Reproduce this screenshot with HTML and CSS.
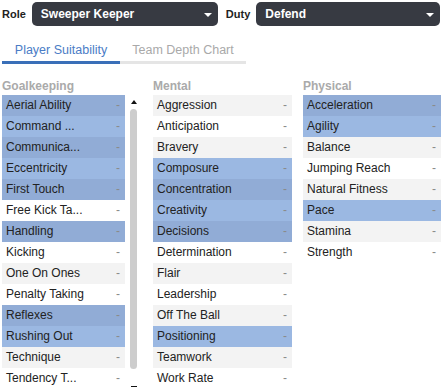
FILE: index.html
```html
<!DOCTYPE html>
<html lang="en">
<head>
  <meta charset="UTF-8">
  <title>Role Suitability</title>
  <link rel="stylesheet" href="styles.css">
</head>
<body>
  <div class="topbar">
    <label class="field-label">Role</label>
    <div class="select role-select">Sweeper Keeper<span class="caret"></span></div>
    <label class="field-label duty-label">Duty</label>
    <div class="select duty-select">Defend<span class="caret"></span></div>
  </div>

  <div class="tabs">
    <div class="tab active">Player Suitability</div>
    <div class="tab">Team Depth Chart</div>
  </div>

  <div class="columns">
    <div class="group gk">
      <h4>Goalkeeping</h4>
      <div class="gk-body">
        <div class="list scroll" id="gk"></div>
        <div class="scrollbar">
          <span class="arrow-up"></span>
          <span class="thumb"></span>
          <span class="arrow-down"></span>
        </div>
      </div>
    </div>
    <div class="group mental">
      <h4>Mental</h4>
      <div class="list" id="mental"></div>
    </div>
    <div class="group physical">
      <h4>Physical</h4>
      <div class="list" id="physical"></div>
    </div>
  </div>

  <script>
    // attributes, 1 = key attribute for the role
    const groups = {
      gk: [["Aerial Ability", 1], ["Command ...", 1], ["Communica...", 1], ["Eccentricity", 1],
           ["First Touch", 1], ["Free Kick Ta...", 0], ["Handling", 1], ["Kicking", 0],
           ["One On Ones", 0], ["Penalty Taking", 0], ["Reflexes", 1], ["Rushing Out", 1],
           ["Technique", 0], ["Tendency T...", 0], ["Throwing", 0]],
      mental: [["Aggression", 0], ["Anticipation", 0], ["Bravery", 0], ["Composure", 1],
               ["Concentration", 1], ["Creativity", 1], ["Decisions", 1], ["Determination", 0],
               ["Flair", 0], ["Leadership", 0], ["Off The Ball", 0], ["Positioning", 1],
               ["Teamwork", 0], ["Work Rate", 0]],
      physical: [["Acceleration", 1], ["Agility", 1], ["Balance", 0], ["Jumping Reach", 0],
                 ["Natural Fitness", 0], ["Pace", 1], ["Stamina", 0], ["Strength", 0]]
    };

    for (const id in groups) {
      const list = document.getElementById(id);
      groups[id].forEach(([name, key]) => {
        const row = document.createElement("div");
        row.className = "row" + (key ? " key" : "");
        row.innerHTML = `<span class="name">${name}</span><span class="val">-</span>`;
        list.appendChild(row);
      });
    }
  </script>
</body>
</html>
```

FILE: styles.css
```css
body {
  margin: 0;
  padding: 2px;
  font-family: "Liberation Sans", Arial, sans-serif;
  font-size: 12px;
  color: #222;
  background: #fff;
  overflow: hidden;
}

.topbar {
  display: flex;
  align-items: center;
  height: 24px;
}
.field-label {
  font-size: 11px;
  font-weight: bold;
  color: #222;
  margin-right: 6px;
}
.duty-label {
  margin-left: 8px;
}
.select {
  position: relative;
  box-sizing: border-box;
  height: 24px;
  line-height: 24px;
  padding-left: 9px;
  background: #373a42;
  color: #fff;
  font-size: 12px;
  font-weight: bold;
  border-radius: 5px;
}
.role-select { width: 186px; }
.duty-select { width: 184px; }
.caret {
  position: absolute;
  right: 6px;
  top: 11px;
  border-left: 4px solid transparent;
  border-right: 4px solid transparent;
  border-top: 4px solid #fff;
}

.tabs {
  display: flex;
  margin-top: 14px;
}
.tab {
  box-sizing: border-box;
  height: 24px;
  padding-top: 3px;
  text-align: center;
  font-size: 12.5px;
  color: #a9a9a9;
  border-bottom: 3px solid #e5e5e5;
  width: 126px;
}
.tab.active {
  width: 118px;
  color: #4a7cc6;
  border-bottom-color: #3a6fb8;
}

.columns {
  display: flex;
  margin-top: 13px;
}
.group h4 {
  margin: 0;
  height: 18px;
  line-height: 18px;
  font-size: 12px;
  font-weight: bold;
  color: #aaa;
}
.gk { width: 140px; }
.mental { width: 139px; margin-left: 11px; }
.physical { width: 138px; margin-left: 11px; }

.gk-body {
  display: flex;
}
.scroll {
  width: 123px;
  height: 294px;
  overflow: hidden;
}

.row {
  display: flex;
  justify-content: space-between;
  height: 21px;
  line-height: 21px;
  padding: 0 5px 0 4px;
  font-size: 12px;
  background: #fff;
}
.row:nth-child(odd) {
  background: #f3f3f3;
}
.row.key:nth-child(odd) {
  background: #91acd6;
}
.row.key:nth-child(even) {
  background: #9bb8e2;
}
.val {
  color: #8a8a8a;
}

.scrollbar {
  display: flex;
  flex-direction: column;
  align-items: center;
  width: 17px;
  height: 294px;
}
.arrow-up {
  margin-top: 5px;
  border-left: 3px solid transparent;
  border-right: 3px solid transparent;
  border-bottom: 4px solid #111;
}
.thumb {
  width: 7px;
  height: 260px;
  margin-top: 5px;
  background: #cdcdcd;
  border-radius: 4px;
}
.arrow-down {
  margin-top: 17px;
  width: 6px;
  height: 1px;
  background: #111;
}
```
